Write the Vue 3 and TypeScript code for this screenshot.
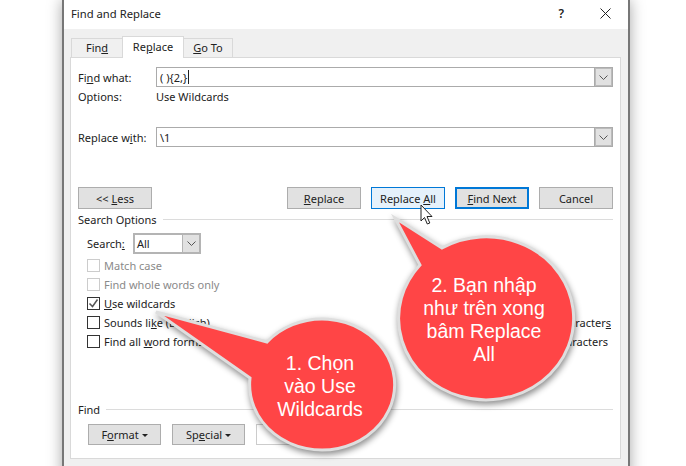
<script setup lang="ts">
const options = [
  { before: 'Match case', u: '', after: '', disabled: true, checked: false, right: '' },
  { before: 'Find whole words only', u: '', after: '', disabled: true, checked: false, right: '' },
  { before: '', u: 'U', after: 'se wildcards', disabled: false, checked: true, right: '' },
  { before: 'Sounds li', u: 'k', after: 'e (English)', disabled: false, checked: false, right: 'Ignore punctuation character' },
  { before: 'Find all ', u: 'w', after: 'ord forms (English)', disabled: false, checked: false, right: 'Ignore white-space characters' },
]
</script>

<template>
  <div class="stage">
    <div class="dialog">
      <header class="title">
        <span>Find and Replace</span>
        <span class="help">?</span>
        <svg class="close" width="11" height="11" viewBox="0 0 11 11"><path d="M.5.5l10 10M10.500.5l-10 10" stroke="#222" fill="none" /></svg>
      </header>
      <div class="body">
        <div class="tabs">
          <div class="tab find-tab">Fin<u>d</u></div>
          <div class="tab active">Re<u>p</u>lace</div>
          <div class="tab"><u>G</u>o To</div>
        </div>
        <div class="page">
          <div class="row first">
            <label class="lab">Fi<u>n</u>d what:</label>
            <div class="combo">
              <span class="val">( ){2,}<i class="caret"></i></span>
              <span class="drop"><svg width="9" height="5" viewBox="0 0 9 5"><path d="M.5.5l4 4 4-4" stroke="#555" fill="none" /></svg></span>
            </div>
          </div>
          <div class="row opts">
            <span class="lab">Options:</span>
            <span>Use Wildcards</span>
          </div>
          <div class="row second">
            <label class="lab">Replace w<u>i</u>th:</label>
            <div class="combo">
              <span class="val">\1</span>
              <span class="drop"><svg width="9" height="5" viewBox="0 0 9 5"><path d="M.5.5l4 4 4-4" stroke="#555" fill="none" /></svg></span>
            </div>
          </div>
          <div class="actions">
            <button class="btn"><span>&lt;&lt; <u>L</u>ess</span></button>
            <div class="spacer"></div>
            <button class="btn"><u>R</u>eplace</button>
            <button class="btn hover">Replace <u>A</u>ll</button>
            <button class="btn default"><u>F</u>ind Next</button>
            <button class="btn">Cancel</button>
          </div>
          <div class="legend"><span>Search Options</span><i></i></div>
          <div class="search">
            <span class="search-lab">Search<u>:</u></span>
            <div class="select">
              <span class="val">All</span>
              <span class="drop"><svg width="9" height="5" viewBox="0 0 9 5"><path d="M.5.5l4 4 4-4" stroke="#555" fill="none" /></svg></span>
            </div>
          </div>
          <div class="checks">
            <div v-for="o in options" :key="o.before + o.after" class="check" :class="{ off: o.disabled }">
              <span class="box">
                <svg v-if="o.checked" width="11" height="11" viewBox="0 0 11 11"><path d="M1.500 5.500l3 3 5-7" stroke="#555" stroke-width="1.500" fill="none" /></svg>
              </span>
              <span class="text">{{ o.before }}<u v-if="o.u">{{ o.u }}</u>{{ o.after }}</span>
              <span class="right" v-if="o.right">{{ o.right }}<u v-if="o.right.endsWith('character')">s</u></span>
            </div>
          </div>
          <div class="legend find"><span>Find</span><i></i></div>
          <div class="bottom">
            <button class="btn small">F<u>o</u>rmat <b></b></button>
            <button class="btn small">Sp<u>e</u>cial <b></b></button>
            <button class="btn small wide"></button>
          </div>
        </div>
      </div>
    </div>

    <svg class="art" width="686" height="466" viewBox="0 0 686 466">
      <path class="bubble" d="M395 218L442 248A87.500 81.500 0 1 1 420 265Z" />
      <path class="bubble" d="M156 312L267 342A72.500 65.500 0 1 1 250 378Z" />
      <path d="M421 205v16l3.500-3.500 2.800 6.500 2.500-1-2.800-6.500h5z" fill="#fff" stroke="#222" stroke-width="1" />
    </svg>
    <div class="say say2">2. Bạn nhập<br />như trên xong<br />bâm Replace<br />All</div>
    <div class="say say1">1. Chọn<br />vào Use<br />Wildcards</div>
  </div>
</template>

<style>
html, body { margin: 0; background: #fff; overflow: hidden; }
</style>

<style scoped>
.stage { position: relative; width: 686px; height: 466px; overflow: hidden; background: #fff; font: 11px/15px "Noto Sans", sans-serif; color: #222; }
.dialog { width: 564px; height: 480px; margin-left: 62px; border: solid #777; border-width: 0 2px; box-shadow: 0 0 14px rgba(0,0,0,.35); background: #f0f0f0; }
.title { height: 27px; padding: 0 0 2px 7px; background: #fff; display: flex; align-items: center; font-size: 11.250px; }
.help { margin-left: auto; margin-right: 36px; font-weight: 600; font-size: 12px; }
.close { margin-right: 17px; }
.body { padding: 7px 7px 0 6px; }
.tabs { display: flex; height: 21px; padding-left: 1px; align-items: flex-end; }
.tab { width: 50px; height: 19px; border: 1px solid #d9d9d9; border-bottom: 0; box-sizing: border-box; text-align: center; line-height: 18px; background: #f0f0f0; }
.tab + .tab { margin-left: -1px; }
.tab.find-tab { width: 52px; }
.tab.active { width: 62px; height: 22px; background: #fff; position: relative; z-index: 1; margin-bottom: -1px; line-height: 19px; }
.page { height: 402px; background: #fff; border: 1px solid #d9d9d9; box-sizing: border-box; padding: 9px 7px 0 7px; display: flow-root; }
.row { display: flex; align-items: center; height: 20px; }
.lab { width: 78px; flex: none; }
.opts { height: 15px; margin-top: 2px; }
.second { margin-top: 23px; }
.combo { flex: 1; height: 20px; border: 1px solid #ababab; box-sizing: border-box; display: flex; align-items: center; justify-content: space-between; }
.val { padding-left: 3px; display: flex; align-items: center; }
.caret { display: inline-block; width: 1px; height: 14px; background: #222; margin-left: 1px; }
.drop { width: 17px; height: 100%; background: #e1e1e1; border-left: 1px solid #ababab; display: flex; align-items: center; justify-content: center; box-shadow: inset 0 0 0 1px #bbb; }
.actions { display: flex; gap: 10px; margin-top: 40px; }
.spacer { flex: 1; }
.btn { width: 74px; height: 22px; padding: 0; border: 1px solid #adadad; background: #e1e1e1; box-sizing: border-box; font: inherit; color: #222; }
.btn.hover { background: #e5f1fb; border-color: #0078d7; }
.btn.default { border: 2px solid #0078d7; }
.legend { display: flex; align-items: center; gap: 6px; height: 15px; margin-top: 3px; }
.legend i { flex: 1; height: 1px; background: #dcdcdc; }
.search { display: flex; align-items: center; margin: 6px 0 0 9px; height: 21px; }
.search-lab { width: 46px; }
.select { width: 68px; height: 21px; border: 2px solid #b4b4b4; box-sizing: border-box; display: flex; align-items: center; justify-content: space-between; }
.select .val { padding-left: 2px; }
.select .drop { box-shadow: none; width: 16px; border-left: 1px solid #b4b4b4; }
.checks { margin: 2px 0 0 9px; }
.check { display: flex; align-items: center; height: 19px; }
.box { width: 13px; height: 13px; border: 1px solid #333; box-sizing: border-box; display: flex; align-items: center; justify-content: center; margin-right: 4px; }
.off .box { border-color: #ccc; }
.off .text { color: #8a8a8a; }
.right { margin-left: auto; padding-right: 2px; }
.check:last-child .right { padding-right: 5px; }
.find { margin-top: 51px; }
.bottom { display: flex; gap: 11px; margin: 7px 0 0 10px; }
.small { width: 73px; height: 21px; }
.small b { display: inline-block; border: 3px solid transparent; border-top-color: #222; border-bottom: 0; vertical-align: 2px; }
.wide { width: 90px; background: #fff; border-color: #ccc; }
.art { position: absolute; left: 0; top: 0; }
.bubble { fill: #ff4546; stroke: #dedede; stroke-width: 3; filter: drop-shadow(1px 3px 3px rgba(0,0,0,.45)); }
.say { position: absolute; color: #fff; font: 19.500px/23px "Liberation Sans", sans-serif; text-align: center; }
.say2 { left: 404px; top: 274px; width: 160px; }
.say1 { left: 250px; top: 352px; width: 140px; }
</style>
